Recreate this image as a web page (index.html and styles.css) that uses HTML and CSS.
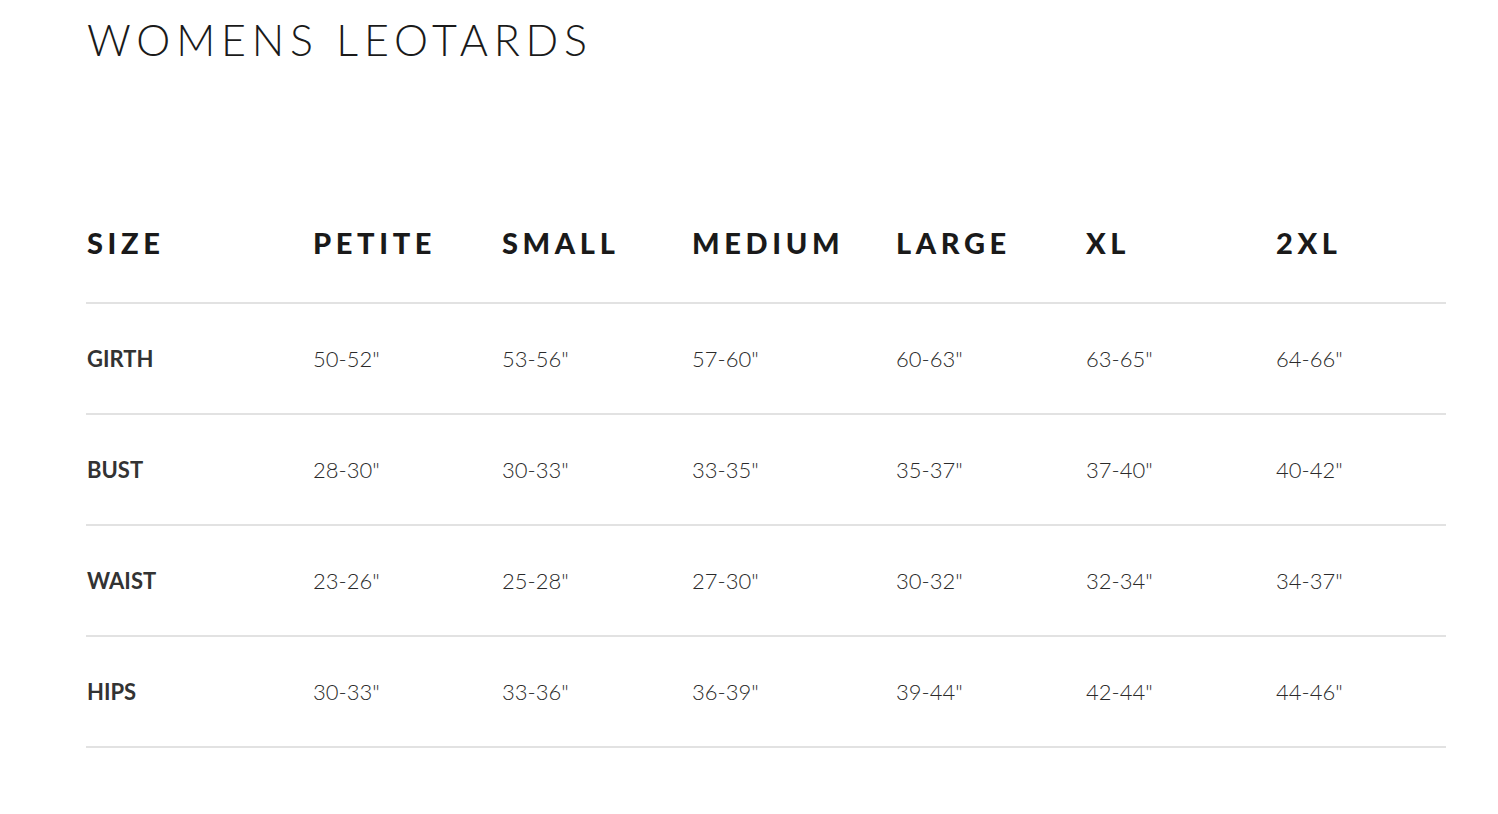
FILE: index.html
```html
<!DOCTYPE html>
<html lang="en">
<head>
<meta charset="utf-8">
<title>Womens Leotards</title>
<link rel="stylesheet" href="styles.css">
</head>
<body>
<main class="page">
  <h1 class="title">WOMENS LEOTARDS</h1>
  <div class="table">
    <div class="row head">
      <div>SIZE</div><div>PETITE</div><div>SMALL</div><div>MEDIUM</div><div>LARGE</div><div>XL</div><div>2XL</div>
    </div>
    <div class="row">
      <div class="label">GIRTH</div><div>50-52"</div><div>53-56"</div><div>57-60"</div><div>60-63"</div><div>63-65"</div><div>64-66"</div>
    </div>
    <div class="row">
      <div class="label">BUST</div><div>28-30"</div><div>30-33"</div><div>33-35"</div><div>35-37"</div><div>37-40"</div><div>40-42"</div>
    </div>
    <div class="row">
      <div class="label">WAIST</div><div>23-26"</div><div>25-28"</div><div>27-30"</div><div>30-32"</div><div>32-34"</div><div>34-37"</div>
    </div>
    <div class="row">
      <div class="label">HIPS</div><div>30-33"</div><div>33-36"</div><div>36-39"</div><div>39-44"</div><div>42-44"</div><div>44-46"</div>
    </div>
  </div>
</main>
</body>
</html>
```

FILE: styles.css
```css
html, body {
  margin: 0;
  padding: 0;
  background: #ffffff;
}
.page {
  padding-left: 86px;
  width: 1360px;
  font-family: Lato, "Liberation Sans", sans-serif;
  color: #1a1a1a;
}
.title {
  margin: 0;
  font-weight: 300;
  font-size: 43px;
  line-height: 80px;
  letter-spacing: 0.135em;
  padding-left: 1px;
  color: #1a1a1a;
}
.table {
  margin-top: 103px;
}
.row {
  display: grid;
  grid-template-columns: 226px 189px 190px 204px 190px 190px 171px;
  align-items: center;
  height: 109px;
  border-bottom: 2px solid #e2e2e2;
  font-size: 22px;
  font-weight: 300;
  color: #2a2a2a;
}
.row > div {
  padding-left: 1px;
}
.row.head {
  height: 119px;
  font-size: 29px;
  font-weight: 900;
  letter-spacing: 0.16em;
  color: #1a1a1a;
}
.label {
  font-weight: 700;
  color: #333333;
}
```
